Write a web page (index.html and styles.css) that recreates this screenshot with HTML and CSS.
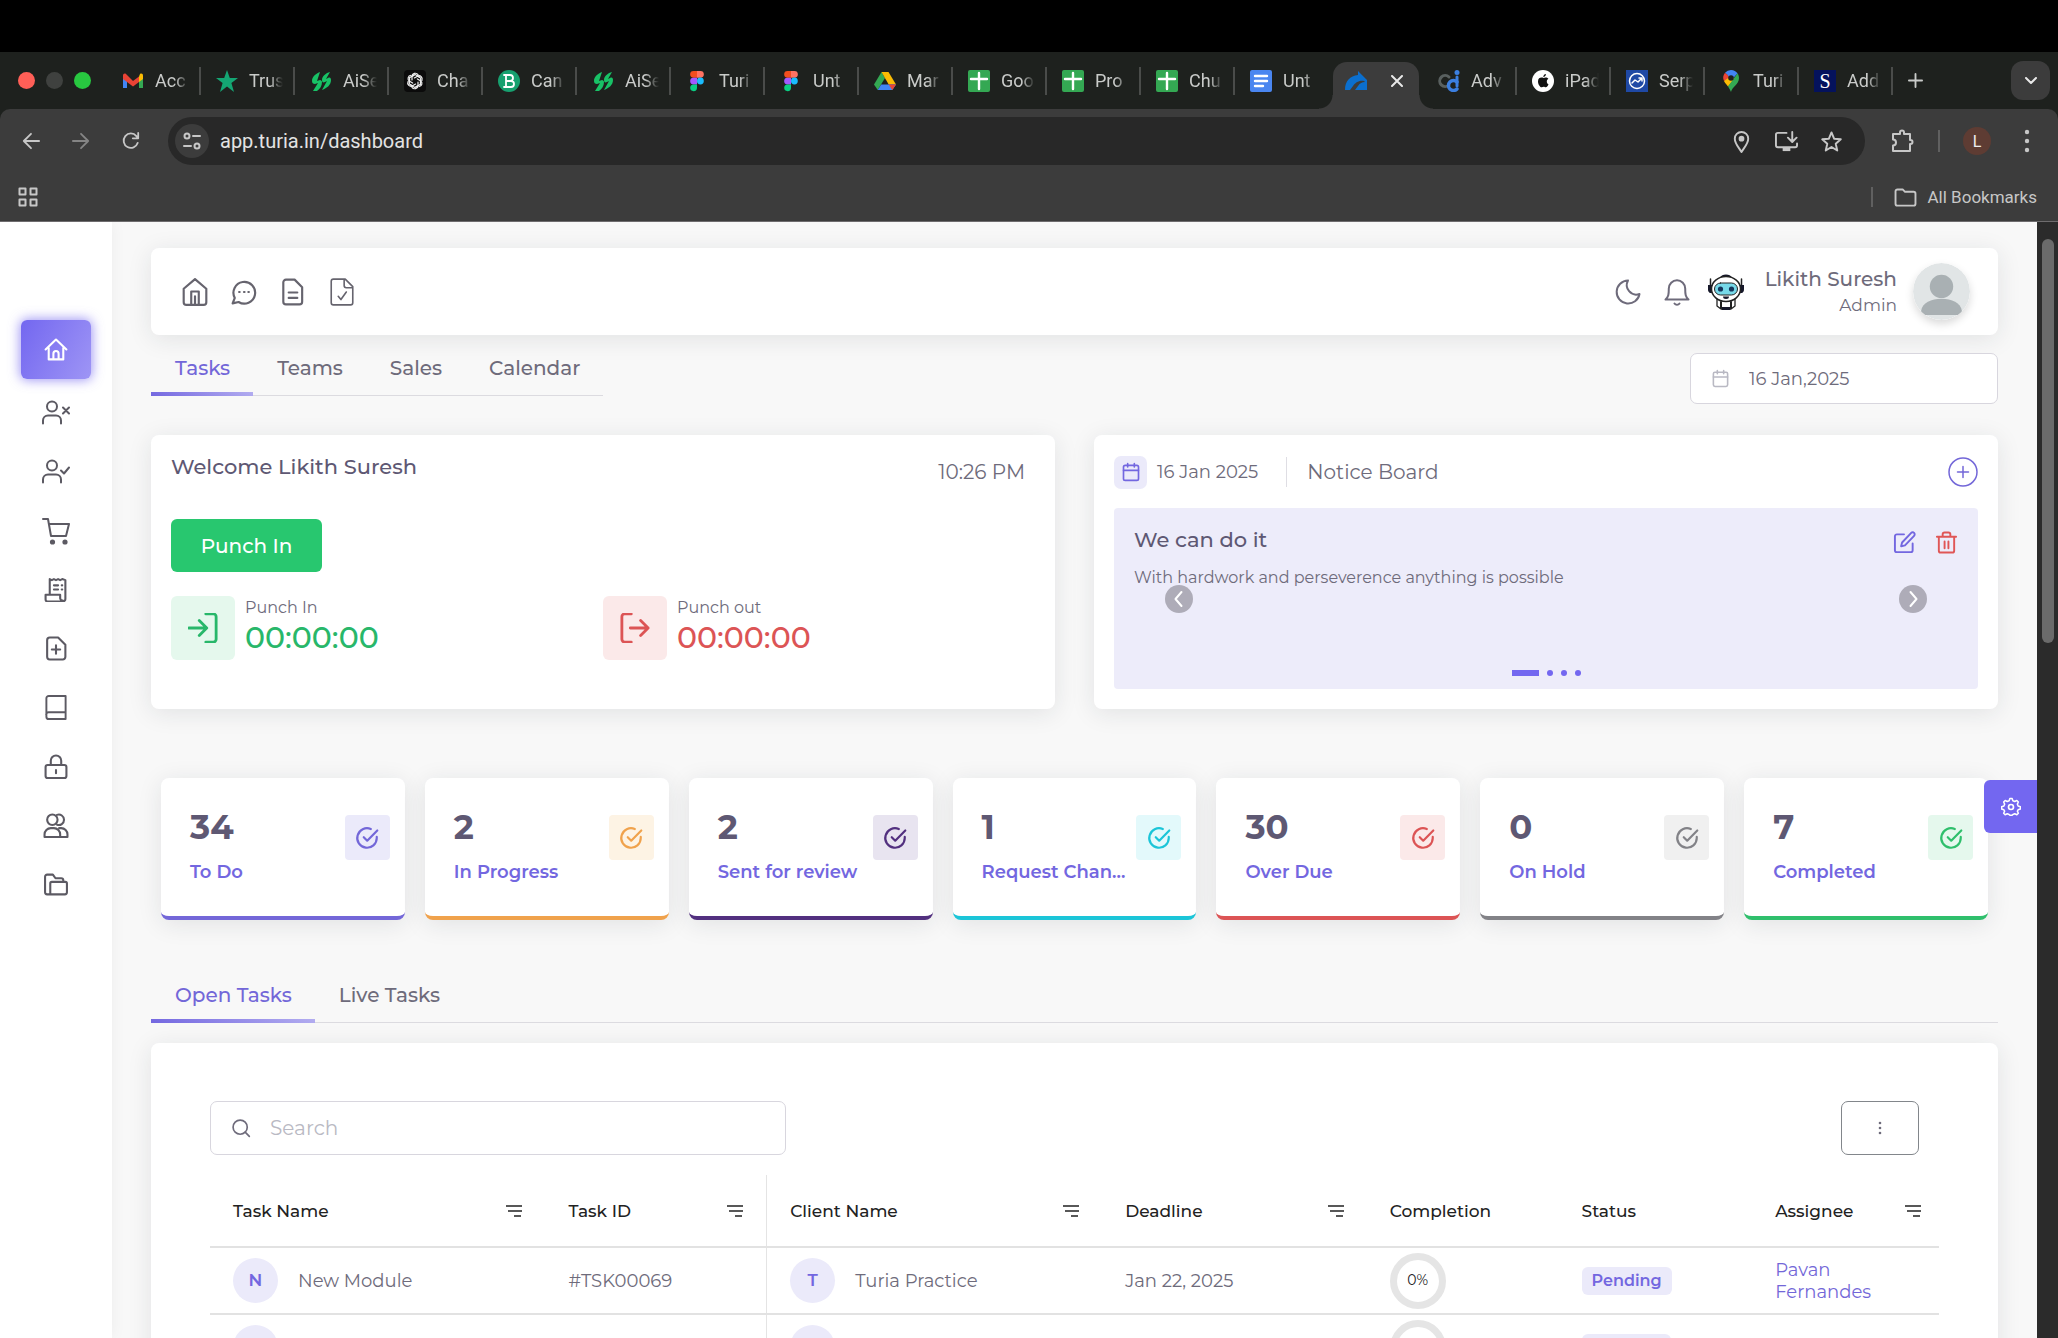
FILE: index.html
```html
<!DOCTYPE html>
<html lang="en">
<head>
    <meta charset="UTF-8">
    <meta name="viewport" content="width=device-width, initial-scale=1.0">
    <title>Turia Dashboard</title>
    <link rel="stylesheet" href="styles.css">
</head>
<body>
    <!-- Shared icons -->
    <svg class="sprite" aria-hidden="true">
        <symbol id="i-sheet" viewBox="0 0 22 22"><rect width="22" height="22" rx="2" fill="#34a853"/><path d="M11 3v16M3 9h16" stroke="#fff" stroke-width="2.4"/></symbol>
        <symbol id="i-figma" viewBox="0 0 22 22"><path d="M11 1H7.500a3.300 3.300 0 0 0 0 6.700H11z" fill="#f24e1e"/><path d="M11 1h3.500a3.300 3.300 0 0 1 0 6.700H11z" fill="#ff7262"/><path d="M11 7.700H7.500a3.300 3.300 0 0 0 0 6.700H11z" fill="#a259ff"/><circle cx="14.400" cy="11" r="3.400" fill="#1abcfe"/><path d="M11 14.400H7.500a3.400 3.400 0 1 0 3.500 3.400z" fill="#0acf83"/></symbol>
        <symbol id="i-bolt" viewBox="0 0 22 22"><path d="M10 2C5 4 2 7 2 11c0 2 1 3 3 3l3-1-5 8h4c3-2 5-5 5-9 0-1-1-2-2-2l-3 1zM20 2c-4 1-8 4-8 8 0 2 1 3 3 2l2-1-5 9c5-2 9-5 9-10 0-2-1-3-3-2l-2 1z" fill="#18c266"/></symbol>
        <symbol id="i-check" viewBox="0 0 24 24"><path d="M21 11v1a9 9 0 1 1-5.500-8.300M21.500 5 12.200 14.500 9 11.300"/></symbol>
        <symbol id="i-calendar" viewBox="0 0 24 24"><rect x="3" y="4" width="18" height="18" rx="2"/><path d="M16 2v4M8 2v4M3 10h18"/></symbol>
        <symbol id="i-filter" viewBox="0 0 16 14"><path d="M0 2h16M2 7h14M8 12h7"/></symbol>
    </svg>

    <!-- Browser frame -->
    <div class="menubar"></div>
    <div class="tabstrip">
        <div class="lights"><span class="light red"></span><span class="light grey"></span><span class="light green"></span></div>
        <div class="tabs">
            <a class="tab" href="#"><svg class="fav" viewBox="0 0 22 22"><path d="M1 5v13h4V9z" fill="#4285f4"/><path d="M21 5v13h-4V9z" fill="#34a853"/><path d="M1 5.500V9l10 7.500V11L4 4C2.500 3 1 4 1 5.500z" fill="#ea4335"/><path d="M21 5.500V9l-4 3V6.500L18 4c1.500-1 3 0 3 1.500z" fill="#fbbc04"/><path d="M11 11v5.500l6-4.500V6.500z" fill="#ea4335"/></svg><span>Acc</span></a>
            <a class="tab" href="#"><svg class="fav" viewBox="0 0 22 22"><path d="m11 0 2.800 8H22l-6.600 5 2.600 9-7-5.400L4 22l2.600-9L0 8h8.200z" fill="#14a673"/></svg><span>Trus</span></a>
            <a class="tab" href="#"><svg class="fav"><use href="#i-bolt"/></svg><span>AiSe</span></a>
            <a class="tab" href="#"><svg class="fav" viewBox="0 0 22 22"><rect width="22" height="22" rx="4" fill="#0b0b0b"/><g fill="none" stroke="#eee" stroke-width="1.200"><path id="petal" d="M8 10V6.500a3.300 3.300 0 0 1 6-1.800M8 6.500l3.200-1.900 4.300 2.500"/><use href="#petal" transform="rotate(60 11 11)"/><use href="#petal" transform="rotate(120 11 11)"/><use href="#petal" transform="rotate(180 11 11)"/><use href="#petal" transform="rotate(240 11 11)"/><use href="#petal" transform="rotate(300 11 11)"/></g></svg><span>Cha</span></a>
            <a class="tab" href="#"><svg class="fav" viewBox="0 0 22 22"><circle cx="11" cy="11" r="11" fill="#17a06f"/><path d="M8 5h4a3 3 0 0 1 0 6H8zm0 6h5a3 3 0 0 1 0 6H8zM6 5h2M6 17h2" fill="none" stroke="#fff" stroke-width="1.800"/></svg><span>Can</span></a>
            <a class="tab" href="#"><svg class="fav"><use href="#i-bolt"/></svg><span>AiSe</span></a>
            <a class="tab" href="#"><svg class="fav"><use href="#i-figma"/></svg><span>Turi</span></a>
            <a class="tab" href="#"><svg class="fav"><use href="#i-figma"/></svg><span>Unt</span></a>
            <a class="tab" href="#"><svg class="fav" viewBox="0 0 22 22"><path d="M7.500 2 0 14.500 3.700 20 11 8z" fill="#34a853"/><path d="M7.500 2h7L22 14.500h-7.300z" fill="#fbbc04"/><path d="m3.700 20 3.500-5.500H22L18.300 20z" fill="#4285f4"/><path d="M14.700 14.500H22L18.300 20z" fill="#ea4335"/></svg><span>Mar</span></a>
            <a class="tab" href="#"><svg class="fav"><use href="#i-sheet"/></svg><span>Goo</span></a>
            <a class="tab" href="#"><svg class="fav"><use href="#i-sheet"/></svg><span>Pro</span></a>
            <a class="tab" href="#"><svg class="fav"><use href="#i-sheet"/></svg><span>Chu</span></a>
            <a class="tab last" href="#"><svg class="fav" viewBox="0 0 22 22"><rect width="22" height="22" rx="2" fill="#4a86f0"/><path d="M5 6h12M5 11h12M5 16h8" stroke="#fff" stroke-width="2.400"/></svg><span>Unt</span></a>
            <div class="tab active">
                <svg class="fav" viewBox="0 0 22 22"><path d="M0 20c0-9 5-14 13-15V1l9 9v10H10l3-4c2-3 4-4 7-4l-1-1c-5-1-9 2-11 5l-3 4z" fill="#0b6fce"/></svg>
                <button class="tab-close" aria-label="Close tab"><svg viewBox="0 0 12 12"><path d="m1 1 10 10M11 1 1 11"/></svg></button>
            </div>
            <a class="tab" href="#"><svg class="fav" viewBox="0 0 22 22"><path d="M11 7a5.500 5.500 0 1 0 0 8" fill="none" stroke="#59605f" stroke-width="3"/><path d="M19 12a5 5 0 1 0 0 7" fill="none" stroke="#3b7fe0" stroke-width="3.400"/><path d="M19 7v9" stroke="#3b7fe0" stroke-width="3"/><circle cx="19" cy="2.500" r="2.500" fill="#3b7fe0"/></svg><span>Adv</span></a>
            <a class="tab" href="#"><svg class="fav" viewBox="0 0 22 22"><circle cx="11" cy="11" r="11" fill="#fff"/><path d="M14.800 11.500c0-1.500.8-2.300 1.600-2.700-1.200-1.700-3.300-1.700-4.900-.8-1.900-1-5.500-.6-5.500 3.400 0 3 2.200 5.900 3.700 5.900.8 0 1.200-.5 2-.5s1.100.5 2 .5c1.300 0 2.400-1.900 2.800-3-.9-.4-1.700-1.300-1.700-2.800zM11.300 7c0-1.500 1-2.800 2.600-3 .1 1.600-1.100 3-2.600 3z" fill="#111"/></svg><span>iPad</span></a>
            <a class="tab" href="#"><svg class="fav" viewBox="0 0 22 22"><rect width="22" height="22" fill="#1f49a5"/><circle cx="11" cy="11" r="7.500" fill="none" stroke="#fff" stroke-width="1.500"/><path d="m6 13 3-3 3 2 4-4m-3 0h3v3" fill="none" stroke="#fff" stroke-width="1.500"/></svg><span>Serp</span></a>
            <a class="tab" href="#"><svg class="fav" viewBox="0 0 22 22"><path d="M11 0a8 8 0 0 0-6 2.800L11 8z" fill="#4285f4"/><path d="M5 2.800A8 8 0 0 0 4 11l7-3z" fill="#ea4335"/><path d="M4 11c1 2 2.500 3.500 4 5.500l7-8L11 6z" fill="#fbbc04"/><path d="M11 22c1-5 8-7.500 8-14 0-2-.6-3.500-1.500-4.800L8 16.500C9.500 18.500 10 20 11 22z" fill="#34a853"/><path d="M11 0c3 0 5 1.300 6.500 3.200L13 8.500 8 6z" fill="#4285f4"/><circle cx="11" cy="8" r="2.800" fill="#1e211e"/></svg><span>Turi</span></a>
            <a class="tab" href="#"><span class="fav fav-s">S</span><span>Add</span></a>
        </div>
        <button class="new-tab" aria-label="New tab"><svg viewBox="0 0 16 16"><path d="M8 1v14M1 8h14"/></svg></button>
        <button class="tab-search" aria-label="Search tabs"><svg viewBox="0 0 12 8"><path d="m1 1 5 5 5-5"/></svg></button>
    </div>

    <div class="toolbar">
        <button class="tool" aria-label="Back"><svg viewBox="0 0 20 20"><path d="M19 10H2M10 2l-8 8 8 8"/></svg></button>
        <button class="tool dim" aria-label="Forward"><svg viewBox="0 0 20 20"><path d="M1 10h17M10 2l8 8-8 8"/></svg></button>
        <button class="tool" aria-label="Reload"><svg viewBox="0 0 20 20"><path d="M17.500 12a8 8 0 1 1-1.500-7.500L18 7M18 1v6h-6"/></svg></button>
        <div class="omnibox">
            <button class="site-info" aria-label="Site information"><svg viewBox="0 0 20 20"><circle cx="5" cy="5" r="2.500"/><path d="M11 5h7M2 15h7"/><circle cx="15" cy="15" r="2.500"/></svg></button>
            <input class="url" type="text" value="app.turia.in/dashboard" aria-label="Address">
            <button class="omni-btn" aria-label="Location"><svg viewBox="0 0 24 24"><path d="M12 23C9 18 5 14 5 9a7 7 0 0 1 14 0c0 5-4 9-7 14z"/><circle cx="12" cy="9" r="2" fill="#c7c7c7"/></svg></button>
            <button class="omni-btn" aria-label="Install app"><svg viewBox="0 0 24 24"><path d="M12 3H3a2 2 0 0 0-2 2v11a2 2 0 0 0 2 2h18a2 2 0 0 0 2-2v-2M18 2v10M13.500 8l4.500 4.500L22.500 8"/><path d="M8 18h8v4H8z" fill="#c7c7c7" stroke="none"/></svg></button>
            <button class="omni-btn" aria-label="Bookmark"><svg viewBox="0 0 24 24"><path d="m12 2.500 2.700 6.600 7 .6-5.300 4.700 1.600 7L12 17.700l-6 3.700 1.600-7L2.300 9.700l7-.6z"/></svg></button>
        </div>
        <div class="toolbar-end">
            <button class="tool" aria-label="Extensions"><svg viewBox="0 0 24 24"><path d="M3 5h7V3.500a2 2 0 0 1 4 0V5h6v6h.500a2 2 0 0 1 0 4H20v7H3v-5.500a3 3 0 0 0 0-6z"/></svg></button>
            <span class="rule"></span>
            <button class="profile" aria-label="Profile">L</button>
            <button class="tool" aria-label="Menu"><svg class="dots" viewBox="0 0 24 24"><circle cx="12" cy="3" r="2.200"/><circle cx="12" cy="12" r="2.200"/><circle cx="12" cy="21" r="2.200"/></svg></button>
        </div>
    </div>

    <div class="bookmarks">
        <button class="tool" aria-label="Apps"><svg viewBox="0 0 20 20"><path d="M1.500 1.500h6v6h-6zM12.500 1.500h6v6h-6zM1.500 12.500h6v6h-6zM12.500 12.500h6v6h-6z"/></svg></button>
        <a class="all-bookmarks" href="#"><svg viewBox="0 0 24 20"><path d="M1.500 3.500a2 2 0 0 1 2-2H9L11.500 4h9a2 2 0 0 1 2 2v10.500a2 2 0 0 1-2 2h-17a2 2 0 0 1-2-2z"/></svg>All Bookmarks</a>
    </div>

    <div class="page">
        <nav class="sidebar" aria-label="Main">
            <a class="side-link active" href="#" aria-label="Home"><svg viewBox="0 0 24 24"><path d="M2 12 12 2.500 22 12M5 10v11.500h14V10M9.500 21.500V16a2.500 2.500 0 0 1 5 0v5.500"/></svg></a>
            <a class="side-link" href="#" aria-label="Absent"><svg viewBox="0 0 28 24"><circle cx="10" cy="6" r="5"/><path d="M1 23v-3a5 5 0 0 1 5-5h8a5 5 0 0 1 5 5v3M21 7l6 6M27 7l-6 6"/></svg></a>
            <a class="side-link" href="#" aria-label="Present"><svg viewBox="0 0 28 24"><circle cx="10" cy="6" r="5"/><path d="M1 23v-3a5 5 0 0 1 5-5h8a5 5 0 0 1 5 5v3M19 11l3 3 5-6"/></svg></a>
            <a class="side-link" href="#" aria-label="Orders"><svg class="cart" viewBox="0 0 28 28"><path d="M1 2h5l3 17h15l3-12H7"/><circle cx="10.500" cy="25" r="1.600" fill="#5c5a63"/><circle cx="23" cy="25" r="1.600" fill="#5c5a63"/></svg></a>
            <a class="side-link" href="#" aria-label="Invoices"><svg viewBox="0 0 24 24"><path d="M6 16V2l2 1 2-1 2 1 2-1 2 1 2-1 3 1v18a2.500 2.500 0 0 1-2.500 2.500H4a2 2 0 0 1-2-2V17h14v3.500a2.500 2.500 0 0 0 2.500 2M10 8h4M10 12h4M17.500 8h.500M17.500 12h.500"/></svg></a>
            <a class="side-link" href="#" aria-label="New file"><svg viewBox="0 0 24 24"><path d="M6 1.500h8l7 7V20a2.500 2.500 0 0 1-2.500 2.500H6A2.500 2.500 0 0 1 3.500 20V4A2.500 2.500 0 0 1 6 1.500zM12 9v8M8 13h8"/></svg></a>
            <a class="side-link" href="#" aria-label="Library"><svg viewBox="0 0 24 26"><path d="M22 1H4.500A2.500 2.500 0 0 0 2 3.500v19A2.500 2.500 0 0 0 4.500 25H22zM2 21.500A2.500 2.500 0 0 1 4.500 18H22"/></svg></a>
            <a class="side-link" href="#" aria-label="Passwords"><svg viewBox="0 0 24 24"><rect x="2" y="10.500" width="20" height="12.500" rx="2"/><path d="M7 10.500V6.500a5 5 0 0 1 10 0v4M12 15.500v3"/></svg></a>
            <a class="side-link" href="#" aria-label="Teams"><svg viewBox="0 0 24 24"><circle cx="8.500" cy="6.500" r="5"/><path d="M13 1.800a5 5 0 1 1 0 9.400M1 23v-2.500a6 6 0 0 1 6-6h3a6 6 0 0 1 6 6V23zM15 14.500h2a6 6 0 0 1 6 6V23h-7"/></svg></a>
            <a class="side-link" href="#" aria-label="Documents"><svg viewBox="0 0 24 24"><path d="M6 21.500H3.500a2 2 0 0 1-2-2v-15a2 2 0 0 1 2-2H9L11.500 6H17a2 2 0 0 1 2 2v1.500M8 9.500h13a1.500 1.500 0 0 1 1.500 1.500v8.500a2 2 0 0 1-2 2H6.500V11A1.500 1.500 0 0 1 8 9.500z"/></svg></a>
        </nav>

        <main class="content">
            <header class="topbar card">
                <div class="shortcuts">
                    <a href="#" aria-label="Home"><svg viewBox="0 0 24 26"><path d="M1.500 10 12 1l10.500 9v12.500a2.500 2.500 0 0 1-2.500 2.500H4a2.500 2.500 0 0 1-2.500-2.500zM8.500 25V12.500h7V25M12 17v8"/></svg></a>
                    <a href="#" aria-label="Chat"><svg viewBox="0 0 24 24"><path d="M3.500 17.500A10 10 0 1 1 7 21.200L1.500 22.500zM7.500 12h.500M12 12h.500M16 12h.500"/></svg></a>
                    <a href="#" aria-label="Document"><svg viewBox="0 0 24 26"><path d="M5.500 1.500h8l7 7v13.500a2.500 2.500 0 0 1-2.500 2.500H5.500A2.500 2.500 0 0 1 3 22V4a2.500 2.500 0 0 1 2.500-2.500zM8 13.500h8M8 18.500h8"/></svg></a>
                    <a class="thin" href="#" aria-label="Approvals"><svg viewBox="0 0 24 26"><path d="M4 1h11l7 7v15a2 2 0 0 1-2 2H4a2 2 0 0 1-2-2V3a2 2 0 0 1 2-2zM14 1v6a2 2 0 0 0 2 2h6M8.500 17l2.500 3 5-7"/></svg></a>
                </div>
                <div class="user">
                    <button class="icon-btn" aria-label="Dark mode"><svg viewBox="0 0 26 26"><path d="M13 1.500A11.500 11.500 0 1 0 24.500 15 9.500 9.500 0 0 1 13 1.500z"/></svg></button>
                    <button class="icon-btn" aria-label="Notifications"><svg viewBox="0 0 26 28"><path d="M1.500 21.500h23c-3-2.500-3.300-5-3.300-11a8.200 8.200 0 0 0-16.400 0c0 6-.3 8.500-3.300 11zM10.500 25.500a3 3 0 0 0 5 0"/></svg></button>
                    <button class="icon-btn" aria-label="Assistant">
                        <svg class="robot" viewBox="0 0 38 38">
                            <path d="M3.500 6v10M34.500 6v10" stroke="#222" stroke-width="1.500"/>
                            <path d="M13 4.500a6.500 5 0 0 1 12 0zM1 12h5v8H3.500a2.500 3.500 0 0 1-2.500-4zM37 12h-5v8h2.500a2.500 3.500 0 0 0 2.500-4z" fill="#16182a"/>
                            <path d="M10 26h18v7l-4 3H14l-4-3z" fill="#fff" stroke="#222" stroke-width="1.300"/>
                            <path d="M14 34h10l-1 3h-8z" fill="#16182a"/>
                            <ellipse cx="19" cy="16" rx="14.500" ry="12.500" fill="#fff" stroke="#222" stroke-width="1.500"/>
                            <rect x="7.500" y="10" width="23" height="12" rx="6" fill="#77d9e9" stroke="#222" stroke-width="1"/>
                            <circle cx="13.500" cy="16" r="2.600" fill="#16365c"/><circle cx="24.500" cy="16" r="2.600" fill="#16365c"/>
                            <path d="M16 23.500h6a3 2.500 0 0 1-6 0z" fill="#16182a"/>
                            <path d="M14 29v6M24 29v6" stroke="#222"/>
                        </svg>
                    </button>
                    <div class="user-name"><strong>Likith Suresh</strong><span>Admin</span></div>
                    <svg class="avatar" viewBox="0 0 56 56"><circle cx="28" cy="28" r="28" fill="#e1e5e6"/><circle cx="28" cy="23" r="11.500" fill="#a9b0b3"/><path d="M8 47c1-8 10-12 20-12s19 4 20 12c0 2-1 4-3 4H11c-2 0-3-2-3-4z" fill="#a9b0b3"/></svg>
                </div>
            </header>

            <div class="subnav">
                <nav class="section-tabs" aria-label="Dashboard">
                    <a class="current" href="#">Tasks</a>
                    <a href="#">Teams</a>
                    <a href="#">Sales</a>
                    <a href="#">Calendar</a>
                </nav>
                <div class="field date-field">
                    <svg><use href="#i-calendar"/></svg>
                    <input type="text" value="16 Jan,2025" aria-label="Date">
                </div>
            </div>

            <div class="panels">
                <section class="card welcome">
                    <div class="welcome-head">
                        <h1>Welcome Likith Suresh</h1>
                        <time>10:26 PM</time>
                    </div>
                    <button class="punch-btn">Punch In</button>
                    <div class="punches">
                        <div class="punch in">
                            <span class="punch-icon"><svg viewBox="0 0 32 32"><path d="M1 16h18M12 8l8 8-8 8M19 1h8a3 3 0 0 1 3 3v24a3 3 0 0 1-3 3h-8"/></svg></span>
                            <div><p>Punch In</p><b>00:00:00</b></div>
                        </div>
                        <div class="punch out">
                            <span class="punch-icon"><svg viewBox="0 0 32 32"><path d="M12 1H5a3 3 0 0 0-3 3v24a3 3 0 0 0 3 3h7M11 16h19M22 8l8 8-8 8"/></svg></span>
                            <div><p>Punch out</p><b>00:00:00</b></div>
                        </div>
                    </div>
                </section>

                <section class="card board">
                    <div class="board-head">
                        <span class="chip"><svg><use href="#i-calendar"/></svg></span>
                        <time>16 Jan 2025</time>
                        <h2>Notice Board</h2>
                        <button class="add" aria-label="Add notice"><svg viewBox="0 0 30 30"><circle cx="15" cy="15" r="14"/><path d="M15 9.500v11M9.500 15h11"/></svg></button>
                    </div>
                    <div class="notice">
                        <div class="notice-head">
                            <h3>We can do it</h3>
                            <div class="notice-tools">
                                <button class="edit" aria-label="Edit"><svg viewBox="0 0 24 24"><path d="M11.500 3.500H4a2 2 0 0 0-2 2v14.500a2 2 0 0 0 2 2h14.500a2 2 0 0 0 2-2V13M19 2a2 2 0 0 1 3 3L12.500 15l-4 1 1-4z"/></svg></button>
                                <button class="delete" aria-label="Delete"><svg viewBox="0 0 24 24"><path d="M2 6h20M8 6V3.500a2 2 0 0 1 2-2h4a2 2 0 0 1 2 2V6M4 6v14.500a2 2 0 0 0 2 2h12a2 2 0 0 0 2-2V6M10 11v7M14 11v7"/></svg></button>
                            </div>
                        </div>
                        <p>With hardwork and perseverence anything is possible</p>
                        <button class="arrow prev" aria-label="Previous"><svg viewBox="0 0 28 28"><path d="m16.500 7-6 7 6 7"/></svg></button>
                        <button class="arrow next" aria-label="Next"><svg viewBox="0 0 28 28"><path d="m11.500 7 6 7-6 7"/></svg></button>
                        <div class="pager"><button class="on" aria-label="Notice 1"></button><button aria-label="Notice 2"></button><button aria-label="Notice 3"></button><button aria-label="Notice 4"></button></div>
                    </div>
                </section>
            </div>

            <div class="stats">
                <a class="card stat purple" href="#"><div><b>34</b><span>To Do</span></div><i><svg><use href="#i-check"/></svg></i></a>
                <a class="card stat orange" href="#"><div><b>2</b><span>In Progress</span></div><i><svg><use href="#i-check"/></svg></i></a>
                <a class="card stat violet" href="#"><div><b>2</b><span>Sent for review</span></div><i><svg><use href="#i-check"/></svg></i></a>
                <a class="card stat cyan" href="#"><div><b>1</b><span>Request Chan...</span></div><i><svg><use href="#i-check"/></svg></i></a>
                <a class="card stat red" href="#"><div><b>30</b><span>Over Due</span></div><i><svg><use href="#i-check"/></svg></i></a>
                <a class="card stat grey" href="#"><div><b>0</b><span>On Hold</span></div><i><svg><use href="#i-check"/></svg></i></a>
                <a class="card stat green" href="#"><div><b>7</b><span>Completed</span></div><i><svg><use href="#i-check"/></svg></i></a>
            </div>

            <nav class="section-tabs wide" aria-label="Task lists">
                <a class="current" href="#">Open Tasks</a>
                <a href="#">Live Tasks</a>
            </nav>

            <section class="card tasks">
                <div class="tasks-head">
                    <div class="field search-field">
                        <svg viewBox="0 0 24 24"><circle cx="11" cy="11" r="8.500"/><path d="m17 17 5 5"/></svg>
                        <input type="search" placeholder="Search" aria-label="Search tasks">
                    </div>
                    <button class="more" aria-label="More options"><svg viewBox="0 0 4 16"><circle cx="2" cy="3" r="1.300"/><circle cx="2" cy="8" r="1.300"/><circle cx="2" cy="13" r="1.300"/></svg></button>
                </div>
                <table>
                    <colgroup><col class="c-name"><col class="c-id"><col class="c-client"><col class="c-date"><col class="c-done"><col class="c-status"><col class="c-who"></colgroup>
                    <thead>
                        <tr>
                            <th><div>Task Name<svg><use href="#i-filter"/></svg></div></th>
                            <th class="pinned"><div>Task ID<svg><use href="#i-filter"/></svg></div></th>
                            <th><div>Client Name<svg><use href="#i-filter"/></svg></div></th>
                            <th><div>Deadline<svg><use href="#i-filter"/></svg></div></th>
                            <th><div>Completion</div></th>
                            <th><div>Status</div></th>
                            <th><div>Assignee<svg><use href="#i-filter"/></svg></div></th>
                        </tr>
                    </thead>
                    <tbody>
                        <tr>
                            <td><div class="who"><span class="initial">N</span>New Module</div></td>
                            <td class="pinned">#TSK00069</td>
                            <td><div class="who"><span class="initial">T</span>Turia Practice</div></td>
                            <td>Jan 22, 2025</td>
                            <td><span class="ring">0%</span></td>
                            <td><span class="badge">Pending</span></td>
                            <td><a href="#">Pavan Fernandes</a></td>
                        </tr>
                        <tr>
                            <td><div class="who"><span class="initial"></span></div></td>
                            <td class="pinned"></td>
                            <td><div class="who"><span class="initial"></span></div></td>
                            <td></td>
                            <td><span class="ring"></span></td>
                            <td><span class="badge empty"></span></td>
                            <td></td>
                        </tr>
                    </tbody>
                </table>
            </section>
        </main>

        <button class="customizer" aria-label="Settings"><svg viewBox="0 0 24 24"><path d="m9.500 4.500 1-3h3l1 3 2.500 1 2.800-1.400 2 2-1.300 2.900 1 2.500 3 1v3l-3 1-1 1.800 1.300 2.800-2 2-2.800-1.300-2.500 1-1 1h-3l-1-1-2.500-1-2.800 1.300-2-2 1.300-2.800-1-1.800-3-1v-3l3-1 1-2.500-1.300-2.900 2-2L7 5.500z" transform="translate(1.200 .5) scale(.9)"/><circle cx="12" cy="12" r="3"/></svg></button>
        <div class="scrollbar"><div class="thumb"></div></div>
    </div>
</body>
</html>
```
FILE: styles.css
```css
/* Reset and basic styles */
* {
    margin: 0;
    padding: 0;
    box-sizing: border-box;
}

body {
    height: 100vh;
    display: flex;
    flex-direction: column;
    overflow: hidden;
    font-family: Montserrat, "Inter", sans-serif;
    font-size: 18px;
    color: #6e6b7b;
    background: #000;
}

a {
    color: inherit;
    text-decoration: none;
}

button {
    display: flex;
    align-items: center;
    justify-content: center;
    border: 0;
    background: none;
    font: inherit;
    color: inherit;
    cursor: pointer;
}

input {
    border: 0;
    outline: 0;
    background: none;
    font: inherit;
    color: inherit;
    min-width: 0;
}

svg {
    display: block;
    flex: none;
    fill: none;
    stroke: currentColor;
    stroke-width: 2;
    stroke-linecap: round;
    stroke-linejoin: round;
}

.sprite {
    position: absolute;
    width: 0;
    height: 0;
}

/* Browser frame */
.menubar {
    height: 52px;
    flex: none;
}

.tabstrip,
.toolbar,
.bookmarks {
    flex: none;
    display: flex;
    align-items: center;
    font-family: Roboto, "Inter", sans-serif;
}

/* The strip runs on behind the toolbar's rounded corners */
.tabstrip {
    height: 67px;
    margin-bottom: -10px;
    padding: 0 8px 10px 0;
    background: #1e211e;
    color: #c9cbc9;
    font-size: 18px;
}

.lights {
    width: 107px;
    display: flex;
    gap: 11px;
    padding-left: 18px;
}

.light {
    width: 17px;
    height: 17px;
    border-radius: 50%;
}

.light.red { background: #ff5f57; }
.light.grey { background: #3f413f; }
.light.green { background: #28c840; }

.tabs {
    display: flex;
    align-self: stretch;
}

.tab {
    width: 94px;
    display: flex;
    align-items: center;
    gap: 11px;
    padding-left: 15px;
    background: linear-gradient(#4a4c4a, #4a4c4a) right center / 2px 28px no-repeat;
}

.tab.last {
    background: none;
}

.tab > span:last-child {
    width: 34px;
    overflow: hidden;
    white-space: nowrap;
    -webkit-mask-image: linear-gradient(90deg, #000 60%, transparent);
    mask-image: linear-gradient(90deg, #000 60%, transparent);
}

.fav {
    width: 22px;
    height: 22px;
    stroke: none;
}

.fav-s {
    background: #04125c;
    color: #fff;
    font: 20px/22px "Liberation Serif", serif;
    text-align: center;
}

.tab.active {
    position: relative;
    width: 86px;
    margin: 10px 4px 0;
    padding: 0 16px 10px 12px;
    justify-content: space-between;
    background: #3c3c3c;
    border-radius: 14px 14px 0 0;
}

/* Flared feet of the active tab */
.tab.active::before,
.tab.active::after {
    content: "";
    position: absolute;
    bottom: 0;
    width: 14px;
    height: 14px;
}

.tab.active::before {
    right: 100%;
    background: radial-gradient(circle at 0 0, transparent 13px, #3c3c3c 14px);
}

.tab.active::after {
    left: 100%;
    background: radial-gradient(circle at 100% 0, transparent 13px, #3c3c3c 14px);
}

.tab-close svg {
    width: 12px;
    height: 12px;
    stroke: #e8e8e8;
}

.new-tab {
    width: 44px;
    height: 38px;
}

.new-tab svg {
    width: 15px;
    height: 15px;
}

.tab-search {
    width: 39px;
    height: 39px;
    margin-left: auto;
    border-radius: 12px;
    background: #3c3c3c;
}

.tab-search svg {
    width: 12px;
    height: 8px;
    stroke: #e8e8e8;
}

.toolbar {
    position: relative;
    height: 64px;
    padding: 0 8px;
    background: #3c3c3c;
    color: #c7c7c7;
    border-radius: 10px 10px 0 0;
}

.tool {
    width: 46px;
    height: 40px;
    margin-right: 4px;
}

.tool svg {
    width: 18px;
    height: 18px;
}

.tool.dim {
    color: #858585;
}

.omnibox {
    flex: 1;
    height: 48px;
    display: flex;
    align-items: center;
    margin-left: 10px;
    padding: 0 11px 0 7px;
    border-radius: 24px;
    background: #282828;
}

.site-info {
    width: 34px;
    height: 34px;
    border-radius: 50%;
    background: #3c3c3c;
}

.site-info svg {
    width: 20px;
    height: 20px;
}

.url {
    flex: 1;
    margin-left: 11px;
    font-size: 20px;
    color: #e3e3e3;
}

.omni-btn {
    width: 45px;
    height: 40px;
}

.omni-btn svg {
    width: 23px;
    height: 23px;
}

.toolbar-end {
    display: flex;
    align-items: center;
    padding-left: 14px;
}

.toolbar-end .tool {
    margin: 0;
}

.toolbar-end .tool svg {
    width: 24px;
    height: 24px;
}

.toolbar-end svg.dots {
    fill: currentColor;
    stroke: none;
}

.rule {
    width: 2px;
    height: 22px;
    margin: 0 23px 0 13px;
    background: #606060;
}

.profile {
    width: 28px;
    height: 28px;
    margin-right: 13px;
    border-radius: 50%;
    background: #5e3c33;
    color: #eee;
    font-size: 16px;
}

.bookmarks {
    height: 49px;
    justify-content: space-between;
    padding: 0 21px 0 5px;
    background: #3c3c3c;
    border-bottom: 1px solid #6e6c6e;
    color: #c7c7c7;
    font-size: 17px;
}

.bookmarks .tool svg {
    width: 20px;
    height: 20px;
}

.all-bookmarks {
    display: flex;
    align-items: center;
    gap: 11px;
    padding-left: 23px;
    background: linear-gradient(#606060, #606060) left center / 2px 100% no-repeat;
}

.all-bookmarks svg {
    width: 23px;
    height: 19px;
}

/* App shell */
.page {
    position: relative;
    flex: 1;
    min-height: 0;
    display: flex;
    overflow: hidden;
    background: #f8f8f8;
}

.sidebar {
    width: 112px;
    flex: none;
    display: flex;
    flex-direction: column;
    align-items: center;
    padding-top: 98px;
    background: #fff;
    box-shadow: 0 0 15px rgba(34, 41, 47, 0.05);
    color: #5c5a63;
}

.side-link {
    width: 70px;
    height: 59px;
    flex: none;
    display: flex;
    align-items: center;
    justify-content: center;
}

.side-link svg {
    width: 28px;
    height: 25px;
}

.side-link .cart {
    height: 28px;
}

.side-link.active {
    margin-bottom: 4px;
    border-radius: 6px;
    background: linear-gradient(118deg, #7367f0, #9e95f5);
    box-shadow: 0 0 12px 1px rgba(115, 103, 240, 0.7);
    color: #fff;
}

.content {
    flex: 1;
    min-width: 0;
    padding: 26px 39px 0;
}

.card {
    background: #fff;
    border-radius: 8px;
    box-shadow: 0 4px 24px rgba(34, 41, 47, 0.1);
}

/* Top bar */
.topbar {
    height: 87px;
    display: flex;
    align-items: center;
    justify-content: space-between;
    padding: 0 28px 0 31px;
}

.shortcuts {
    display: flex;
    gap: 23px;
    color: #66646e;
}

.shortcuts svg {
    width: 26px;
    height: 28px;
}

.thin svg {
    stroke-width: 1.500;
}

.user {
    display: flex;
    align-items: center;
}

.icon-btn {
    width: 49px;
    height: 44px;
}

.icon-btn svg {
    width: 26px;
    height: 28px;
}

.icon-btn .robot {
    width: 38px;
    height: 38px;
    stroke: none;
}

.user-name {
    display: flex;
    flex-direction: column;
    align-items: flex-end;
    margin: 0 16px 0 14px;
    font-size: 17px;
    line-height: 26px;
}

.user-name strong {
    font-size: 20px;
    font-weight: 500;
}

.avatar {
    width: 57px;
    height: 57px;
    border-radius: 50%;
    stroke: none;
    box-shadow: 0 4px 8px rgba(0, 0, 0, 0.15);
}

/* Tabs and date */
.subnav {
    display: flex;
    align-items: flex-start;
    justify-content: space-between;
    margin-top: 18px;
}

.section-tabs {
    display: flex;
    border-bottom: 1px solid #dcdbe0;
}

.section-tabs a {
    padding: 0 23px 0 24px;
    font-size: 20px;
    font-weight: 500;
    line-height: 30px;
    height: 42px;
}

.section-tabs .current {
    margin-bottom: -1px;
    height: 43px;
    color: #7367d8;
    background: linear-gradient(30deg, #7367e0, #b3adf0) left bottom / 100% 4px no-repeat;
}

.field {
    display: flex;
    align-items: center;
    border: 1px solid #d8d6de;
    border-radius: 7px;
    background: #fff;
}

.date-field {
    width: 308px;
    height: 51px;
    padding: 0 20px;
    gap: 19px;
}

.date-field input {
    flex: 1;
}

.date-field svg {
    width: 19px;
    height: 19px;
    color: #b9b9c3;
}

/* Welcome and notice board */
.panels {
    display: grid;
    grid-template-columns: 1fr 1fr;
    gap: 39px;
    margin-top: 31px;
}

.panels .card {
    height: 274px;
    padding: 20px;
}

.welcome-head {
    display: flex;
    justify-content: space-between;
    padding-right: 10px;
    font-size: 20px;
    line-height: 34px;
}

h1, h2, h3 {
    font-size: 21px;
    font-weight: 500;
    color: #5e5873;
}

h1 {
    line-height: 24px;
}

.punch-btn {
    width: 151px;
    height: 53px;
    margin: 30px 0 24px;
    border-radius: 6px;
    background: #28c76f;
    color: #fff;
    font-size: 20px;
    font-weight: 500;
}

.punches {
    display: grid;
    grid-template-columns: 1fr 1fr;
}

.punch {
    display: flex;
    gap: 10px;
}

.punch p {
    font-size: 16px;
    line-height: 24px;
}

.punch b {
    font-size: 30px;
    font-weight: 500;
    line-height: 36px;
}

.punch-icon {
    width: 64px;
    height: 64px;
    display: flex;
    align-items: center;
    justify-content: center;
    border-radius: 6px;
}

.punch-icon svg {
    width: 30px;
    height: 30px;
    stroke-width: 3;
}

.in .punch-icon { background: #e5f8ed; }
.in b, .in svg { color: #28b76a; }
.out .punch-icon { background: #fbe9e9; }
.out b, .out svg { color: #dc5455; }

.board-head {
    display: flex;
    align-items: center;
    height: 34px;
    margin-bottom: 19px;
}

.chip {
    width: 33px;
    height: 33px;
    display: flex;
    align-items: center;
    justify-content: center;
    margin-right: 10px;
    border-radius: 7px;
    background: #ebeafa;
    color: #7367e0;
}

.chip svg {
    width: 20px;
    height: 20px;
}

.board-head time {
    padding-right: 28px;
    border-right: 1px solid #dfdee4;
    line-height: 30px;
}

.board-head h2 {
    padding-left: 20px;
    font-size: 20px;
    font-weight: 400;
    color: #6e6b7b;
}

.add {
    margin-left: auto;
    color: #7367d8;
}

.add svg {
    width: 30px;
    height: 30px;
    stroke-width: 1.500;
}

.notice {
    position: relative;
    height: 181px;
    padding: 20px;
    border-radius: 4px;
    background: #edecfa;
}

.notice-head {
    display: flex;
    justify-content: space-between;
    line-height: 24px;
}

.notice-tools {
    display: flex;
    gap: 19px;
    padding-top: 3px;
}

.notice-tools svg {
    width: 23px;
    height: 23px;
}

.edit { color: #7367e0; }
.delete { color: #e05656; }

.notice p {
    margin-top: 12px;
    font-size: 16px;
    line-height: 24px;
}

.arrow {
    position: absolute;
    top: 77px;
    width: 28px;
    height: 28px;
    border-radius: 50%;
    background: #aeacb8;
    color: #fff;
}

.arrow svg {
    width: 28px;
    height: 28px;
}

.prev { left: 51px; }
.next { right: 51px; }

.pager {
    position: absolute;
    left: 0;
    right: 0;
    bottom: 13px;
    display: flex;
    justify-content: center;
    gap: 8px;
}

.pager button {
    width: 6px;
    height: 6px;
    border-radius: 50%;
    background: #7367f0;
}

.pager .on {
    width: 27px;
    border-radius: 0;
}

/* Task counters */
.stats {
    display: grid;
    grid-template-columns: repeat(7, 1fr);
    gap: 20px;
    margin: 69px 10px 0;
}

.stat {
    height: 142px;
    display: flex;
    justify-content: space-between;
    padding: 28px 15px 0 29px;
    border-bottom: 4px solid var(--tone);
}

.stat div {
    white-space: nowrap;
}

.stat b {
    display: block;
    color: #5e5873;
    font-size: 34px;
    font-weight: 700;
    line-height: 42px;
}

.stat span {
    display: block;
    margin-top: 12px;
    color: #7367e0;
    font-weight: 600;
    line-height: 24px;
}

.stat i {
    width: 45px;
    height: 45px;
    flex: none;
    display: flex;
    align-items: center;
    justify-content: center;
    margin-top: 9px;
    border-radius: 4px;
    background: var(--tint);
    color: var(--tone);
}

.stat svg {
    width: 26px;
    height: 26px;
}

.purple { --tone: #7367d8; --tint: #ebeafa; }
.orange { --tone: #f0a24c; --tint: #fdf3e4; }
.violet { --tone: #52307f; --tint: #e8e4f0; }
.cyan { --tone: #1bc5d8; --tint: #e3f9fb; }
.red { --tone: #dc5455; --tint: #fbe9e9; }
.grey { --tone: #828287; --tint: #f0f0f0; }
.green { --tone: #2fbf6c; --tint: #e5f8ed; }

/* Task table */
.section-tabs.wide {
    margin-top: 60px;
}

.tasks {
    margin-top: 20px;
    height: 400px;
    padding: 58px 59px 0;
}

.tasks-head {
    display: flex;
    justify-content: space-between;
    padding-right: 20px;
    margin-bottom: 20px;
}

.search-field {
    width: 576px;
    height: 54px;
    padding: 0 20px;
    gap: 19px;
    font-size: 20px;
}

.search-field input {
    flex: 1;
}

.search-field input::placeholder {
    color: #b9b9c3;
}

.search-field svg {
    width: 20px;
    height: 20px;
}

.more {
    width: 78px;
    height: 54px;
    border: 1px solid #82868b;
    border-radius: 7px;
}

.more svg {
    width: 4px;
    height: 16px;
    fill: #6e6b7b;
    stroke: none;
}

table {
    width: 100%;
    table-layout: fixed;
    border-collapse: collapse;
}

.c-name { width: 19.4%; }
.c-id { width: 12.8%; }
.c-client { width: 19.4%; }
.c-date { width: 15.3%; }
.c-done { width: 11.1%; }
.c-status { width: 11.2%; }

th, td {
    padding: 0 23px 0 23px;
    text-align: left;
    border-bottom: 2px solid #e2e2e2;
}

th {
    height: 72px;
    font-size: 17px;
    font-weight: 500;
    color: #222;
}

th:last-child {
    padding-right: 18px;
}

th div {
    display: flex;
    align-items: center;
    justify-content: space-between;
}

th svg {
    width: 16px;
    height: 14px;
    stroke-width: 1.500;
    stroke-linecap: butt;
}

td {
    height: 67px;
    line-height: 22px;
}

td a {
    color: #7367d8;
}

.pinned {
    border-right: 1px solid #e4e4e4;
}

.who {
    display: flex;
    align-items: center;
    gap: 20px;
}

.initial {
    width: 45px;
    height: 45px;
    border-radius: 50%;
    background: #ebeafa;
    color: #7367e0;
    font-size: 17px;
    font-weight: 600;
    line-height: 45px;
    text-align: center;
}

.ring {
    display: block;
    width: 56px;
    height: 56px;
    border: 7px solid #e5e5e5;
    border-radius: 50%;
    color: #222;
    font-size: 14px;
    line-height: 40px;
    text-align: center;
}

.badge {
    display: inline-block;
    padding: 0 10px;
    border-radius: 6px;
    background: #ebeafa;
    color: #7367e0;
    font-size: 16px;
    font-weight: 600;
    line-height: 28px;
}

.badge.empty {
    display: block;
    width: 89px;
    height: 28px;
}

/* Overlays */
.customizer {
    position: absolute;
    top: 558px;
    right: 21px;
    width: 53px;
    height: 53px;
    border-radius: 6px 0 0 6px;
    background: #7367f0;
    color: #fff;
}

.customizer svg {
    width: 20px;
    height: 20px;
}

.scrollbar {
    width: 21px;
    flex: none;
    padding: 17px 4px 0 5px;
    background: #2b2b2b;
}

.thumb {
    height: 404px;
    border-radius: 6px;
    background: #6b6b6b;
}
```
